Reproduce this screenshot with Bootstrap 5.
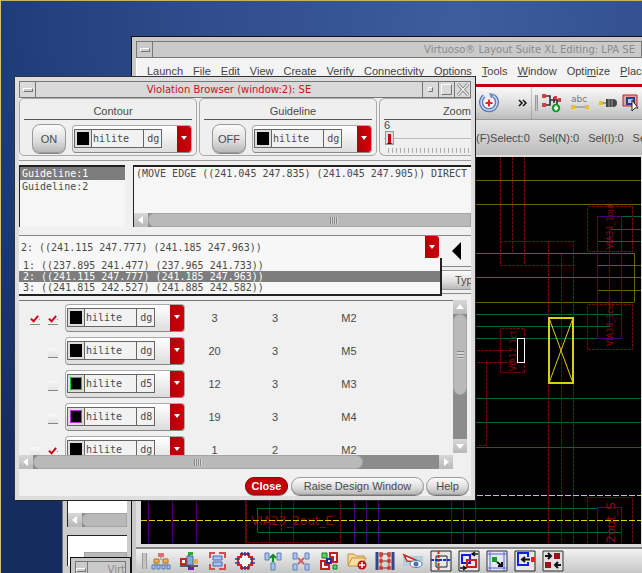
<!DOCTYPE html>
<html lang="en">
<head>
<meta charset="utf-8">
<meta name="viewport" content="width=device-width, initial-scale=1">
<title>Virtuoso Layout Suite XL</title>
<link href="https://cdn.jsdelivr.net/npm/bootstrap@5.3.0/dist/css/bootstrap.min.css" rel="stylesheet">
<style>
body{font:11px/14px "Liberation Sans",Arial,sans-serif;color:#4a4a4a;margin:0}
button,select,input{font:inherit;color:inherit}
.desktop{min-height:100vh;background:radial-gradient(circle at 460px 20px,#3d5d9e 0,#2f4c8c 260px,#21407c 420px,#152c60 620px);border-top:1px solid #c8b06a;border-left:1px solid #d8bc7c}
.mono{font-family:"DejaVu Sans Mono","Liberation Mono",monospace;font-size:10px;line-height:13px}
.win{position:absolute;background:#dcdcdc;border:1px solid #111;padding:4px}
.win-main{left:130px;top:35px;right:0;bottom:0;padding-right:0;padding-bottom:0;border-right:0;border-bottom:0;background:#c9c9c9}
.win-dialog{left:13px;top:75px;width:462px;background:#dedede;border-color:#333 #222 #222 #333}
.win-back{left:61px;top:479px;width:70px;bottom:0;border-bottom:0;border-color:#777;background:#ccc;padding-bottom:0}
.win-low{left:69px;top:556px;width:61px;bottom:0;border-bottom:0;background:#c6c6c6;padding-bottom:0;padding-top:3px}
.titlebar{height:17px;border:1px solid #777;background:#cacaca;font:10px/15px "DejaVu Sans",sans-serif;color:#8b8b8b}
.win-main .title-text{padding-right:6px}
.win-dialog .titlebar{background:#d9d9d9;color:#cc1018}
.tbtn{width:16px;align-self:stretch;border:0;border-right:1px solid #777;background:transparent;padding:0}
.tbtn.end{border-right:0;border-left:1px solid #777}
.nub{width:10px;height:4px;border:1px solid;border-color:#fff #777 #777 #fff;background:#ccc}
.menubar{background:#f3f3f3;height:25px;padding-left:10px;gap:10px;border-left:1px solid #fff}
.menubar a{color:#444;text-decoration:none}
.redline{height:4px;background:#c80008;border-top:1px solid #eee}
.toolbar-row{height:33px;background:linear-gradient(#fafafa,#d9d9d9 60%,#bcbcbc);border-bottom:1px solid #999;padding-left:343px}
.status-row{height:35px;background:linear-gradient(#e4e4e4,#bcbcbc);padding-left:340px;gap:9px}
.canvas-wrap{background:#000;border:solid #ddd;border-width:2px 1px 3px 5px;min-height:0}
.bottombar{height:26px;background:linear-gradient(#f2f2f2,#c6c6c6);border-top:2px solid #888;padding-left:6px;gap:3px}
.bottombar svg{margin-right:3px}
.grip{width:5px;height:16px;border:solid #999;border-width:0 1px;background:#c4c4c4}
svg{display:block;flex:none}
.panel{width:178px;height:58px;border:1px solid #aaa;border-radius:5px;background:#efefef;padding:0 4px;margin-right:2px}
.panel h2{font-size:11px;line-height:14px;font-weight:400;margin:0;padding:5px 0 1px 10px;border-bottom:1px solid #555;text-align:center}
.inner{background:#f0f0f0;overflow:hidden}
.soft-btn{border:1px solid #9a9a9a;background:linear-gradient(#fcfcfc,#dcdcdc 60%,#b8b8b8);padding:0;white-space:nowrap}
.toggle-btn{width:34px;height:29px;border-radius:8px;box-shadow:0 1px 0 #888}
.pick{width:120px;height:28px;border:1px solid #aaa;border-bottom-color:#888;border-radius:4px;background:linear-gradient(#fff,#ddd);padding-left:1px}
.chip{width:18px;height:19px;border:1px solid #666;background:#ddd;padding:2px}
.chip span{display:block;height:100%;background:#000;border:1px solid #000}
.chip .green{border-color:#00d020}
.chip .violet{border-color:#c030d8}
.pick select{appearance:none;width:70px;height:19px;border:1px solid #666;border-left:0;border-radius:0;padding:0 0 0 1px;background:linear-gradient(#666,#666) 51px 0/1px 100% no-repeat #f2f2f2;outline:0}
.drop{background:linear-gradient(90deg,#b00008,#d00008);width:14px;align-self:stretch;border-radius:0 3px 3px 0;pointer-events:none}
.slider{appearance:none;width:100%;height:13px;margin:0;background:linear-gradient(#bbb,#bbb) 0 7px/100% 1px no-repeat}
.slider::-webkit-slider-thumb{appearance:none;width:7px;height:12px;border:2px solid #ddd;border-bottom:1px solid #222;background:#d00010;box-shadow:0 0 0 1px #999}
.ticks{height:5px;margin-left:4px;background:repeating-linear-gradient(90deg,#aaa 0 1px,transparent 1px 4px)}
.sunken{border:solid #222;border-width:2px 0 0 1px;background:#f6f6f6;height:62px}
.guides{width:106px}
.opt{padding:0 2px;white-space:pre}
.opt.on{background:#7d7d7d;color:#fff}
.sb{background:#8c8c8c}
.sb button{border:0;padding:0;width:14px;height:14px;background:linear-gradient(#d8d8d8,#b8b8b8)}
.thumb{background:#b9b9b9;border:1px solid #a5a5a5}
.gripes{width:8px;height:7px;background:repeating-linear-gradient(90deg,#888 0 1px,#d5d5d5 1px 2px)}
.gripes.v{width:7px;height:8px;background:repeating-linear-gradient(#888 0 1px,#d5d5d5 1px 3px)}
.h-thumb{width:76%}.v-thumb{height:53%}
.pane-top{padding-top:28px}.pane-low{margin-top:8px}.stub{height:14px}
.combo-row{height:31px;border-top:1px solid #888;background:#f3f3f3}
.combo-row select{appearance:none;border:0;background:#f7f7f7;outline:0;padding:0 2px;height:23px;border-radius:0}
.combo-row .drop{height:22px}
.popup{position:absolute;left:0;top:22px;width:423px;margin:0;padding:2px 0 1px;background:#f7f7f7;border:solid #222;border-width:0 2px 2px 0;list-style:none;z-index:3}
.popup .opt{padding-left:4px;line-height:11px}
.head-row{height:28px;border-top:1px solid #888;border-bottom:1px solid #888;padding-left:422px}
.head-row button{width:60px;height:20px;text-align:left;padding-left:13px}
.gap-under{padding-bottom:6px}
.grid-view{height:155px;border-top:1px solid #777;overflow:hidden}
.grid-view table{width:432px;table-layout:fixed}
.grid-view td{height:33px;padding:0;text-align:center;vertical-align:middle}
.grid-view td:nth-child(3){padding-left:7px}
.c1{width:25px}.c2{width:14px}.c3{width:133px}.c4{width:47px}.c5{width:74px}.c6{width:74px}
.tick{appearance:none;width:10px;height:10px;margin:5px 0 0;display:block;background:linear-gradient(#f8f8f8,#e2e2e2);border-bottom:1px solid #888}
.tick:checked{background:url("data:image/svg+xml,%3Csvg xmlns='http://www.w3.org/2000/svg' viewBox='0 0 10 10'%3E%3Cpath d='M1 4l3 3 5-6' fill='none' stroke='%23cc0010' stroke-width='2.2'/%3E%3C/svg%3E") #f0f0f0}
.foot{gap:2px;padding:8px 2px 1px 0}
.foot button{height:18px;border-radius:9px;box-shadow:0 1px 0 #777}
.close-btn{width:43px;background:#c40008;border:1px solid #a00008;color:#fff;font-weight:700;padding:0}
.foot .close-btn{margin-right:1px}
.raise-btn{width:133px}.help-btn{width:43px}
</style>
<script src="https://cdn.jsdelivr.net/npm/bootstrap@5.3.0/dist/js/bootstrap.bundle.min.js"></script>
</head>
<body>
<main class="desktop position-relative overflow-hidden">

<section class="win win-back" aria-label="Background window">
  <div class="bg-white border-start border-dark overflow-hidden pane-top">
    <div class="sb d-flex"><button type="button" aria-label="Scroll left"><svg width="14" height="14"><path d="M9 3v8L4 7z" fill="#fff"/></svg></button><div class="thumb flex-grow-1 rounded-start"></div></div>
  </div>
  <div class="bg-white border-start border-top border-dark ps-3 pt-3 pane-low"><div class="thumb stub"></div></div>
</section>
<section class="win win-low" aria-label="Lower window">
  <div class="titlebar d-flex align-items-center"><button class="tbtn d-flex align-items-center justify-content-center" type="button" aria-label="Window menu"><span class="nub"></span></button><span class="ms-3 ps-1">Virt</span></div>
</section>

<section class="win win-main d-flex flex-column" aria-label="Layout editor">
  <div class="titlebar d-flex align-items-center flex-shrink-0">
    <button class="tbtn d-flex align-items-center justify-content-center" type="button" aria-label="Window menu"><span class="nub"></span></button>
    <span class="title-text flex-grow-1 text-end text-nowrap">Virtuoso® Layout Suite XL Editing: LPA SE</span>
  </div>
  <nav class="menubar d-flex align-items-center flex-shrink-0 overflow-hidden text-nowrap">
    <a href="#">Launch</a><a href="#">File</a><a href="#">Edit</a><a href="#">View</a><a href="#">Create</a><a href="#">Verify</a><a href="#">Connectivity</a><a href="#"><u>O</u>ptions</a><a href="#"><u>T</u>ools</a><a href="#"><u>W</u>indow</a><a href="#">Opti<u>m</u>ize</a><a href="#"><u>P</u>lace</a>
  </nav>
  <div class="redline flex-shrink-0"></div>
  <div class="toolbar-row d-flex align-items-center flex-shrink-0 overflow-hidden">
    <svg width="20" height="20" viewBox="0 0 20 20"><path d="M5 3a8 8 0 1 0 10 0" fill="none" stroke="#5a78b8" stroke-width="4"/><path d="M5 3a8 8 0 1 0 10 0" fill="none" stroke="#cfdcf4" stroke-width="1.500"/><path d="M10 0l6 1-4 5z" fill="#7890c8"/><circle cx="10" cy="10" r="5" fill="#f4f6fc"/><path d="M6.500 10h7M10 6.500v7" stroke="#e02828" stroke-width="2"/></svg>
    <svg class="ms-3" width="12" height="10" viewBox="0 0 12 10"><path d="M4 2l3 3-3 3M8 2l3 3-3 3" fill="none" stroke="#111" stroke-width="1.500"/></svg>
    <span class="vr mx-1"></span><span class="grip"></span>
    <svg class="ms-1" width="20" height="20" viewBox="0 0 20 20"><path d="M2 3h6v9H2M8 7h10M12 4v6M15 7v5" fill="none" stroke="#333" stroke-width="1.600"/><path d="M0 1h4v4H0zM0 10h4v4H0zM12 3h3v3h-3zM16 5h3v4h-3z" fill="#d04040"/><circle cx="14" cy="15" r="4.200" fill="#0a9a20"/><path d="M14 12l2.500 3-2.500 3-2.500-3z" fill="#fff"/></svg>
    <svg class="ms-2" width="20" height="20" viewBox="0 0 20 20"><text x="1" y="9" font-size="9" font-family="DejaVu Sans" fill="#777">abc</text><path d="M2 14h16" stroke="#aaa" stroke-width="2"/><path d="M1 12h4v4H1zM15 12h4v4h-4z" fill="#e8c020"/></svg>
    <svg class="ms-2" width="20" height="20" viewBox="0 0 20 20"><path d="M2 10h6" stroke="#999" stroke-width="2"/><path d="M1 8h4v4H1z" fill="#e8c020"/><path d="M8 6h7q4 0 4 4t-4 4H8z" fill="#444"/><path d="M11 6v8M14 6v8" stroke="#999"/></svg>
    <svg class="ms-1" width="20" height="20" viewBox="0 0 20 20"><path d="M1 2h14v11H1z" fill="#e8a0a0" stroke="#c02020"/><path d="M5 5h7v6H5z" fill="#b8ccf0" stroke="#204090" stroke-width="2"/><path d="M10 7v11l3-3 3 0z" fill="#fff" stroke="#222"/></svg>
  </div>
  <div class="status-row d-flex align-items-center flex-shrink-0 overflow-hidden text-nowrap"><span>(F)Select:0</span><span>Sel(N):0</span><span>Sel(I):0</span><span>Sel(O):0</span></div>
  <div class="canvas-wrap flex-grow-1 overflow-hidden">
    <svg width="100%" height="100%" role="img" aria-label="Layout canvas">
      <g transform="translate(-141,-157)" fill="none" shape-rendering="crispEdges">
        <g stroke="#6c5f00"><path d="M141 180.500H800M141 204.500H800M141 253.500H634.500V302M141 277.500H800M141 302.500H634M800 265.500H597.500V290.500H800"/></g>
        <g stroke="#006838"><path d="M622 216.500H800M610 229.500H800M598 241.500H800M141 314.500H622M141 326.500H610M141 338.500H598M141 398.500H800M141 422.500H800M141 447.500H800M257.500 532.500H622M257.500 532V508.500H598"/></g>
        <g stroke="#7a0808" stroke-dasharray="3 1"><path d="M500.500 157V265.500H573M512.500 157V253M524.500 157V265M500 241.500H573.500V543M548.500 241V543M561.500 254V543M587.500 206.500h45v45h-45zM587.500 304.500h45v45h-45zM500.500 328.500h24v44h-24zM477 350.500H512M477 362.500H512M486.500 362V445.500H477M587.500 543V497.500H632.500V543M246.500 500V542.500H340.500V500M281.500 500V532"/></g>
        <g stroke="#4a0070"><path d="M597.500 216.500h24v122h-24zM609.500 229V326M597.500 543V507.500H621.500V543M609.500 520V543M148.500 500V543M172.500 500V543M196.500 500V543M245.500 500V543M269.500 500V543M293.500 500V543M354.500 500V543M366.500 500V543M378.500 500V543M451.500 500V543M463.500 500V543M475.500 500V543"/></g>
        <g fill="#8a0c10" stroke="none" font-family="DejaVu Sans" font-size="12"><text x="251" y="525">VIA23_2out_E</text><g font-size="8"><text transform="translate(613,249) rotate(-90)">VIA34_1out</text><text transform="translate(613,346) rotate(-90)">VIA34_1cut</text><text transform="translate(516,371) rotate(-90)">VIA12_1ct</text></g><text transform="translate(615,543) rotate(-90)">2out_S</text></g>
        <g stroke="#d8d010"><path d="M548.500 317.500h24v65h-24z" stroke-width="2"/><path d="M549 318l24 65M573 318l-24 65" shape-rendering="auto"/><path d="M141 495.500H800M141 520.500H800" stroke-dasharray="6 2"/></g>
        <path d="M517.500 338.500h7v24h-7z" stroke="#fff"/>
      </g>
    </svg>
  </div>
  <div class="bottombar d-flex align-items-center flex-shrink-0 overflow-hidden">
    <span class="grip"></span>
    <svg width="22" height="20" viewBox="0 0 22 20"><path d="M11 5v4M6 10v4M16 10v4M3 14h16" stroke="#888"/><path d="M8 2h6v4H8z" fill="#e07070"/><path d="M4 8h5v4H4zM13 8h5v4h-5z" fill="#f0b050" stroke="#b07020"/><path d="M2 14h3v4H2zM7 14h3v4H7zM12 14h3v4h-3zM17 14h3v4h-3z" fill="#a8c4ee" stroke="#5878b0"/></svg>
    <svg width="22" height="20" viewBox="0 0 22 20"><path d="M2 15h18M11 1v18" stroke="#333" stroke-width="1.500"/><path d="M3 8h5v5H3z" fill="#fff" stroke="#d02020" stroke-width="2"/><path d="M9 5h6v9H9z" fill="#88a8d8" stroke="#4868a0"/><path d="M16 8h4v5h-4z" fill="#e8b050"/><path d="M10 1h5v3h-5z" fill="#20b030"/><path d="M10 16h6v3h-6z" fill="#7020a0"/></svg>
    <svg width="22" height="20" viewBox="0 0 22 20"><path d="M4 7V2h5M13 2h6v5M19 13v5h-6M9 18H4v-5" fill="none" stroke="#d05050" stroke-width="2"/><path d="M7 5h9v4H7zM7 11h9v4H7z" fill="#a8c4ee" stroke="#4868b0"/></svg>
    <svg width="22" height="20" viewBox="0 0 22 20"><path d="M7 3h8v3h3v8h-3v3H7v-3H4V6h3z" fill="#f8f8f8" stroke="#d82020" stroke-width="2"/><path d="M8 1v4M11 1v4M14 1v4M8 15v4M11 15v4M14 15v4M1 8h5M1 12h5M16 8h5M16 12h5" stroke="#283c90" stroke-width="1.500"/></svg>
    <svg width="22" height="20" viewBox="0 0 22 20"><path d="M3 2h4v7H3zM15 2h4v7h-4zM9 12h4v7H9z" fill="#a8c4ee" stroke="#6080b8"/><path d="M11 11V5M8 7l3-3 3 3" fill="none" stroke="#109020" stroke-width="2"/></svg>
    <svg width="22" height="20" viewBox="0 0 22 20"><path d="M3 2h4v6H3zM15 2h4v6h-4zM3 13h4v6H3zM15 13h4v6h-4z" fill="#a8c4ee" stroke="#6080b8"/><path d="M8 7l6 6M14 7l-6 6" stroke="#d06060" stroke-width="2"/></svg>
    <svg width="22" height="20" viewBox="0 0 22 20"><path d="M4 2h5v5H4zM15 14h4v4h-4z" fill="#60d060" stroke="#108020"/><path d="M12 2h7v9h-4V6h-3zM3 10h4v4h4v4H3z" fill="#fff" stroke="#c02020" stroke-width="2"/><path d="M9 8h4v4H9z" fill="#fff" stroke="#2030a0" stroke-width="2"/></svg>
    <svg width="22" height="20" viewBox="0 0 22 20"><path d="M2 14V3h6l2 2h8v3" fill="#f8d890" stroke="#c09040"/><path d="M2 15l4-8h14l-4 8z" fill="#fbe0a0" stroke="#c09040"/><circle cx="16" cy="14" r="4.500" fill="#c01018"/><path d="M16 11v6M13 14h6" stroke="#fff" stroke-width="1.500"/></svg>
    <svg width="22" height="20" viewBox="0 0 22 20"><path d="M3 1v18M19 1v18" stroke="#304888" stroke-width="3"/><path d="M7 3h8M7 10h8M7 17h8" stroke="#444"/><path d="M7 3v14M15 3v14" stroke="#d83020"/><path d="M6 2h2v3H6zM14 2h2v3h-2zM6 9h2v2H6zM14 9h2v2h-2zM6 16h2v2H6zM14 16h2v2h-2z" fill="#f8b0a0" stroke="#d03020" stroke-width="1.500"/></svg>
    <svg width="22" height="20" viewBox="0 0 22 20"><path d="M1 5h20v10H1z" fill="#b0d0e0"/><path d="M2 4l16 7-13-1z" fill="#fff" stroke="#d02020" stroke-width="1.500"/><ellipse cx="14" cy="13" rx="6" ry="3.500" fill="#fff" stroke="#6080a0"/><circle cx="14" cy="13" r="2.500" fill="#5070a8"/></svg>
    <svg width="22" height="22" viewBox="0 0 22 22"><path d="M1 1h20v20H1z" fill="#e8e8e8" stroke="#222"/><path d="M6 6h11v11H6z" fill="none" stroke="#222"/><path d="M8.500 1v20" stroke="#d02020" stroke-width="2" stroke-dasharray="3 1"/><path d="M1 10h20" stroke="#1030d0" stroke-width="2" stroke-dasharray="3 1"/></svg>
    <svg width="22" height="22" viewBox="0 0 22 22"><path d="M1 1h20v20H1z" fill="#e8e8e8" stroke="#222"/><path d="M4 5h8v8H4z" fill="none" stroke="#1020d8" stroke-width="2"/><path d="M9 10h9v7H9z" fill="none" stroke="#d81818" stroke-width="2"/><path d="M20 4h-5M17 2l-3 2 3 2M2 18h5M5 16l3 2-3 2" fill="none" stroke="#111" stroke-width="1.500"/></svg>
    <svg width="22" height="22" viewBox="0 0 22 22"><path d="M1 1h20v20H1z" fill="#e8e8f4" stroke="#333"/><path d="M4 1v20M18 1v20M1 4h20M1 18h20" stroke="#5068d8"/><path d="M6 7h5v5H6z" fill="#10a020"/><path d="M11 12l5 4M16 12v4h-4" fill="none" stroke="#111" stroke-width="2"/></svg>
    <svg width="22" height="22" viewBox="0 0 22 22"><path d="M1 1h20v20H1z" fill="#e8e8e8" stroke="#222"/><path d="M14 7V3H4v12h10v-3" fill="none" stroke="#1020d8" stroke-width="2"/><path d="M17 7h4v5h-4z" fill="#e02020"/><path d="M8 9.500h8M11 7l-3 2.500 3 2.500" fill="none" stroke="#111" stroke-width="2"/></svg>
    <svg width="22" height="22" viewBox="0 0 22 22"><path d="M1 1h20v20H1z" fill="#e0e0e0" stroke="#333"/><path d="M12 3h6v6h-6zM3 12h6v6H3z" fill="#a01018"/><path d="M3 6h6M6 3l3 3-3 3M19 15h-6M16 12l-3 3 3 3" fill="none" stroke="#111" stroke-width="2"/></svg>
  </div>
</section>

<section class="win win-dialog" aria-label="Violation Browser">
  <div class="titlebar d-flex align-items-center">
    <button class="tbtn d-flex align-items-center justify-content-center" type="button" aria-label="Window menu"><span class="nub"></span></button>
    <span class="flex-grow-1 text-center text-nowrap">Violation Browser (window:2): SE</span>
    <button class="tbtn end" type="button" aria-label="Minimize"><svg width="15" height="15"><path d="M5.500 9.500v-4h4" fill="none" stroke="#fff"/><path d="M9.500 5.500v4h-4" fill="none" stroke="#777"/></svg></button>
    <button class="tbtn end" type="button" aria-label="Maximize"><svg width="15" height="15"><path d="M2.500 12.500v-10h10" fill="none" stroke="#fff"/><path d="M12.500 2.500v10h-10" fill="none" stroke="#777"/></svg></button>
    <button class="tbtn end" type="button" aria-label="Close window"><svg width="15" height="15"><path d="M3 2l10 11M13 2L3 13" stroke="#777" stroke-width="3"/><path d="M3 2l10 11M13 2L3 13" stroke="#eee" stroke-width="1.500"/></svg></button>
  </div>
  <div class="inner">
    <div class="d-flex pt-0">
      <div class="panel flex-shrink-0">
        <h2>Contour</h2>
        <div class="d-flex align-items-center justify-content-between pt-1 ps-2"><button class="soft-btn toggle-btn" type="button">ON</button>
          <span class="pick mono d-flex align-items-center"><span class="chip"><span></span></span><select aria-label="Contour layer"><option>hilite&nbsp;&nbsp;&nbsp;dg</option></select><span class="drop ms-auto d-flex align-items-center justify-content-center"><svg width="8" height="5"><path d="M1 0h6L4 4z" fill="#fff"/></svg></span></span></div>
      </div>
      <div class="panel flex-shrink-0">
        <h2>Guideline</h2>
        <div class="d-flex align-items-center justify-content-between pt-1 ps-2"><button class="soft-btn toggle-btn" type="button">OFF</button>
          <span class="pick mono d-flex align-items-center"><span class="chip"><span></span></span><select aria-label="Guideline layer"><option>hilite&nbsp;&nbsp;&nbsp;dg</option></select><span class="drop ms-auto d-flex align-items-center justify-content-center"><svg width="8" height="5"><path d="M1 0h6L4 4z" fill="#fff"/></svg></span></span></div>
      </div>
      <div class="panel flex-fill border-end-0 rounded-0 rounded-start pe-0 me-0">
        <h2 class="text-end">Zoom</h2>
        <label for="zoom" class="d-block lh-1">6</label>
        <input id="zoom" class="slider d-block" type="range" min="0" max="100" value="3">
        <div class="ticks mt-1"></div>
      </div>
    </div>
    <hr class="my-1 opacity-50">
    <div class="d-flex">
      <div class="sunken guides mono flex-shrink-0" role="listbox" aria-label="Guidelines">
        <div class="opt on" role="option" aria-selected="true">Guideline:1</div><div class="opt" role="option">Guideline:2</div>
      </div>
      <div class="sunken mono ms-2 flex-grow-1 d-flex flex-column overflow-hidden">
        <div class="opt flex-grow-1">(MOVE EDGE ((241.045 247.835) (241.045 247.905)) DIRECT</div>
        <div class="sb d-flex"><button type="button" aria-label="Scroll left"><svg width="14" height="14"><path d="M9 3v8L4 7z" fill="#fff"/></svg></button><div class="thumb rounded-start flex-grow-1 d-flex align-items-center justify-content-center"><span class="gripes ms-5"></span></div></div>
      </div>
    </div>
    <div class="pt-2 gap-under position-relative">
      <div class="combo-row position-relative d-flex align-items-start">
        <select class="mono flex-grow-1" aria-label="Violation"><option>2: ((241.115 247.777) (241.185 247.963))</option></select>
        <span class="drop d-flex align-items-center justify-content-center"><svg width="8" height="5"><path d="M1 0h6L4 4z" fill="#fff"/></svg></span>
        <button type="button" class="border-0 bg-transparent p-0 pt-1 ps-2 pe-2 ms-1" aria-label="Previous"><svg width="12" height="22"><path d="M10 2v18L1 11z" fill="#000"/></svg></button>
        <ul class="popup mono" role="listbox" aria-label="Violations">
          <li class="opt" role="option">1: ((237.895 241.477) (237.965 241.733))</li><li class="opt on" role="option" aria-selected="true">2: ((241.115 247.777) (241.185 247.963))</li><li class="opt" role="option">3: ((241.815 242.527) (241.885 242.582))</li>
        </ul>
      </div>
      <div class="head-row d-flex align-items-center overflow-hidden"><button class="soft-btn flex-shrink-0" type="button">Type</button></div>
    </div>
    <div class="d-flex pe-1">
      <div class="flex-grow-1">
        <div class="grid-view">
          <table aria-label="Violations by layer">
            <colgroup><col class="c1"><col class="c2"><col class="c3"><col class="c4"><col class="c5"><col class="c6"><col></colgroup>
            <tbody id="rows"></tbody>
          </table>
        </div>
        <div class="sb d-flex"><button type="button" aria-label="Scroll left"><svg width="14" height="14"><path d="M9 3v8L4 7z" fill="#fff"/></svg></button><div class="thumb h-thumb rounded-pill d-flex align-items-center justify-content-center"><span class="gripes"></span></div><button class="ms-auto" type="button" aria-label="Scroll right"><svg width="14" height="14"><path d="M5 3v8l5-4z" fill="#fff"/></svg></button></div>
      </div>
      <div class="sb d-flex flex-column mb-3"><button type="button" aria-label="Scroll up"><svg width="14" height="14"><path d="M3 9h8L7 4z" fill="#fff"/></svg></button><div class="thumb v-thumb rounded-pill d-flex align-items-center justify-content-center"><span class="gripes v"></span></div><button class="mt-auto" type="button" aria-label="Scroll down"><svg width="14" height="14"><path d="M3 5h8l-4 5z" fill="#fff"/></svg></button></div>
    </div>
    <div class="foot d-flex justify-content-end">
      <button class="close-btn" type="button">Close</button><button class="soft-btn raise-btn" type="button">Raise Design Window</button><button class="soft-btn help-btn" type="button">Help</button>
    </div>
  </div>
</section>
</main>
<script>
const rows=[[true,true,'dg','',3,3,'M2'],[null,false,'dg','',20,3,'M5'],[null,false,'d5','green',12,3,'M3'],[null,false,'d8','violet',19,3,'M4'],[false,true,'dg','',1,2,'M2']];
const box=(v,n)=>v===null?'':`<input class="tick ms-auto" type="checkbox" aria-label="${n}"${v?' checked':''}>`;
document.getElementById('rows').innerHTML=rows.map(r=>`<tr><td class="pe-1">${box(r[0],'Lock')}</td><td>${box(r[1],'Show')}</td><td><span class="pick mono d-flex align-items-center"><span class="chip"><span class="${r[3]}"></span></span><select aria-label="Layer"><option>hilite&nbsp;&nbsp;&nbsp;${r[2]}</option></select><span class="drop ms-auto d-flex align-items-center justify-content-center"><svg width="8" height="5"><path d="M1 0h6L4 4z" fill="#fff"/></svg></span></span></td><td>${r[4]}</td><td>${r[5]}</td><td>${r[6]}</td><td></td></tr>`).join('');
</script>
</body>
</html>
